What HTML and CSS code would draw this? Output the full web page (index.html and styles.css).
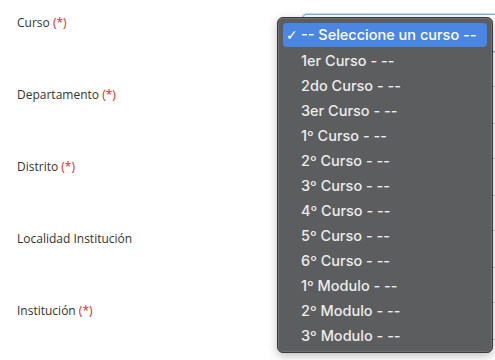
FILE: index.html
```html
<!DOCTYPE html>
<html lang="es">
<head>
<meta charset="utf-8">
<link rel="stylesheet" href="styles.css">
</head>
<body>
<form class="form">
  <div class="row">
    <label class="label">Curso <span class="req">(*)</span></label>
    <div class="field focused"></div>
  </div>
  <div class="row">
    <label class="label">Departamento <span class="req">(*)</span></label>
    <div class="field"></div>
  </div>
  <div class="row">
    <label class="label">Distrito <span class="req">(*)</span></label>
    <div class="field"></div>
  </div>
  <div class="row">
    <label class="label">Localidad Institución</label>
    <div class="field"></div>
  </div>
  <div class="row">
    <label class="label">Institución <span class="req">(*)</span></label>
    <div class="field"><span class="field-text">A</span></div>
  </div>
</form>
<ul class="menu">
  <li class="item selected"><span class="check">✓</span>-- Seleccione un curso --</li>
  <li class="item">1er Curso - --</li>
  <li class="item">2do Curso - --</li>
  <li class="item">3er Curso - --</li>
  <li class="item">1º Curso - --</li>
  <li class="item">2º Curso - --</li>
  <li class="item">3º Curso - --</li>
  <li class="item">4º Curso - --</li>
  <li class="item">5º Curso - --</li>
  <li class="item">6º Curso - --</li>
  <li class="item">1º Modulo - --</li>
  <li class="item">2º Modulo - --</li>
  <li class="item">3º Modulo - --</li>
</ul>
</body>
</html>
```
FILE: styles.css
```css
html, body {
  margin: 0;
  padding: 0;
  background: #ffffff;
  overflow: hidden;
}
body {
  width: 495px;
  height: 360px;
  position: relative;
  font-family: "Open Sans", "Liberation Sans", sans-serif;
  font-size: 12px;
  color: #333333;
}
.form {
  display: flex;
  flex-direction: column;
}
.row {
  display: flex;
  align-items: flex-start;
  height: 72px;
  padding-top: 14px;
  box-sizing: border-box;
}
.label {
  width: 268px;
  padding-left: 17px;
  line-height: 17px;
  flex: none;
}
.req {
  color: #e8212a;
}
.field {
  margin-left: 18px;
  width: 208px;
  height: 38px;
  border: 1px solid #cccccc;
  border-radius: 3px;
  box-sizing: border-box;
  flex: none;
  position: relative;
}
.field.focused {
  border-color: #7aaef0;
  box-shadow: 0 0 0 1px #c7dcfa;
}
.field-text {
  position: absolute;
  right: 0;
  top: 8px;
  font-size: 14px;
  color: #222;
}
.menu {
  position: absolute;
  left: 277px;
  top: 17px;
  width: 216px;
  height: 336px;
  margin: 0;
  padding: 5px 5px;
  box-sizing: border-box;
  list-style: none;
  background: #5c5d5f;
  border: 1px solid #3a3a3c;
  border-radius: 6px;
  box-shadow: inset 0 0 0 1px rgba(255,255,255,0.12), 0 3px 10px rgba(0,0,0,0.25);
  font-family: "Inter", "Roboto", "Liberation Sans", sans-serif;
  font-size: 14.5px;
  font-weight: 500;
  color: #ececec;
}
.item {
  height: 25px;
  line-height: 25px;
  padding-left: 18px;
  position: relative;
  border-radius: 4px;
  white-space: nowrap;
}
.item.selected {
  height: 24px;
  line-height: 24px;
  margin-bottom: 1px;
  background: #4b86e3;
  color: #ffffff;
}
.check {
  position: absolute;
  left: 3px;
  top: 0;
  font-family: "DejaVu Sans", sans-serif;
  font-size: 14px;
  font-weight: 400;
}
```
